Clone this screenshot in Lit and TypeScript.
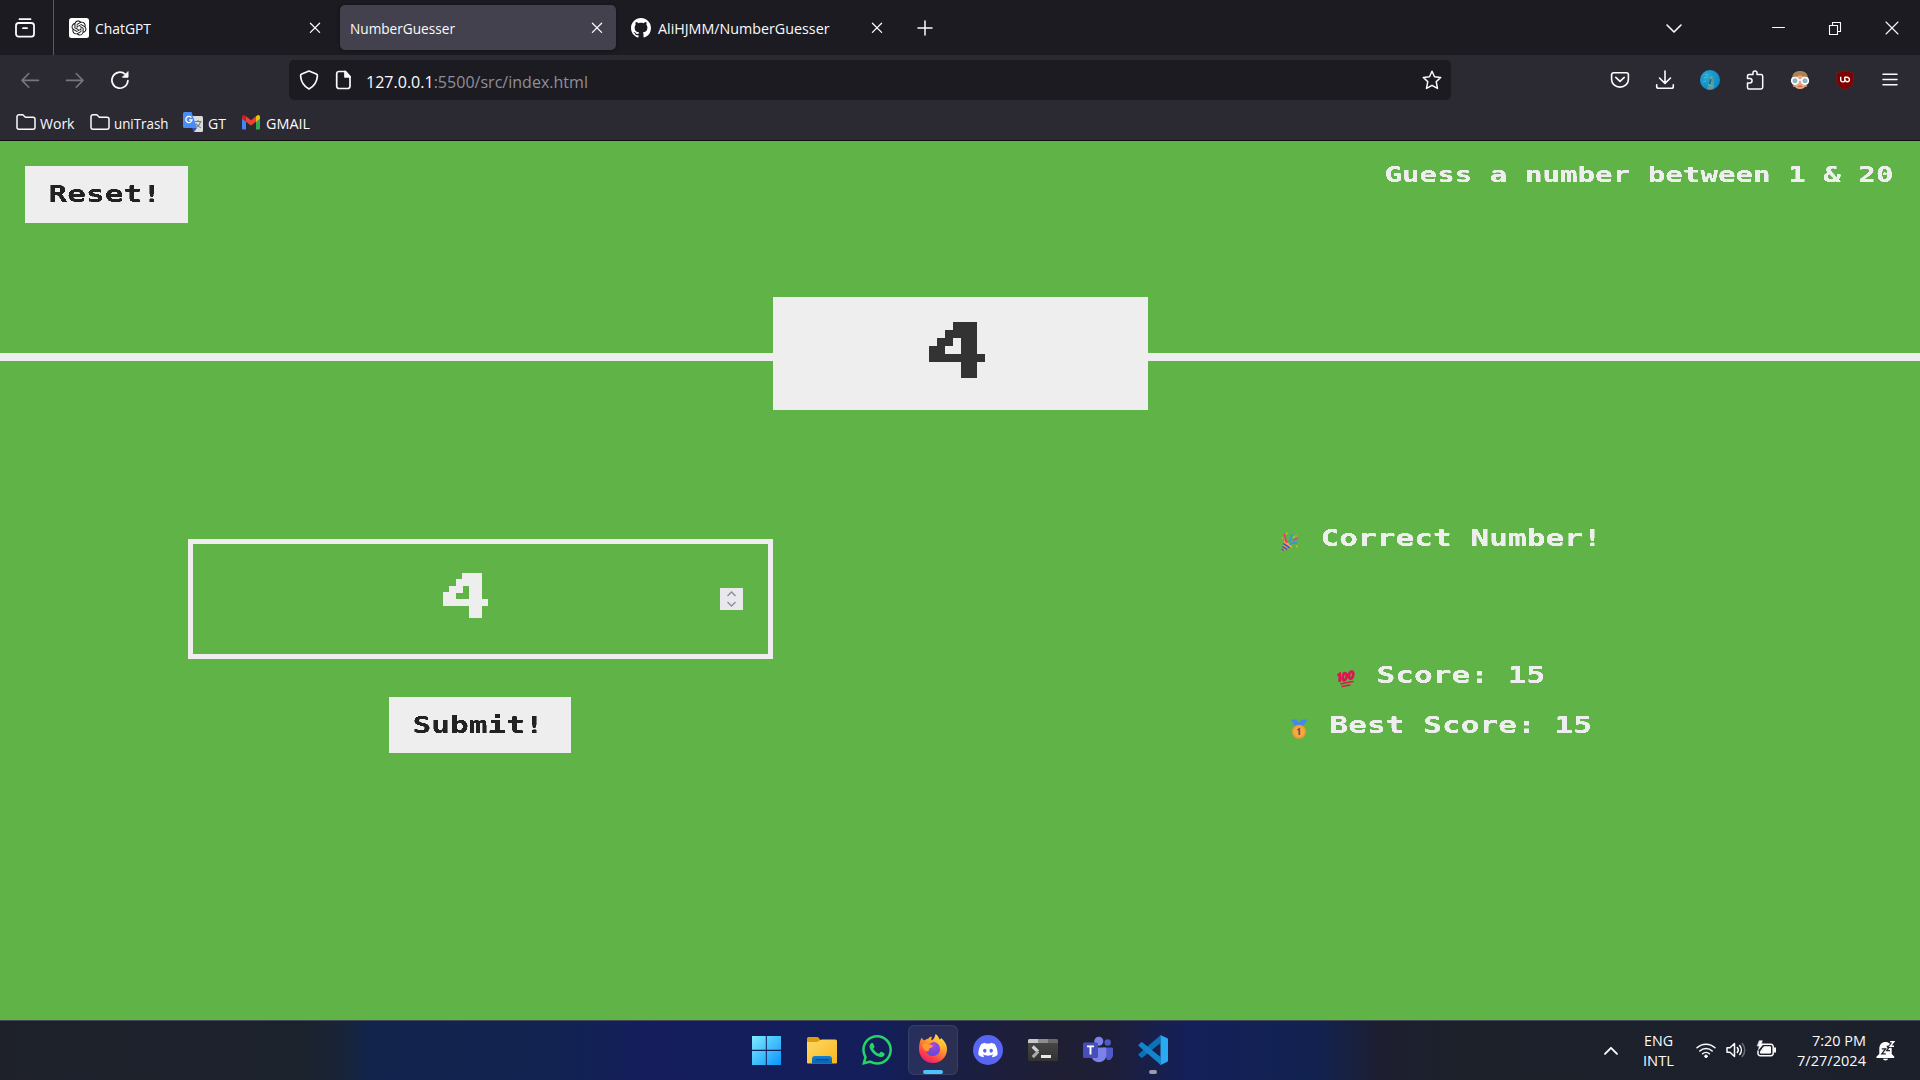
import { LitElement, html, svg, css } from "lit";
import { customElement, property, state } from "lit/decorators.js";

const OPENAI =
  "M22.2819 9.8211a5.9847 5.9847 0 0 0-.5157-4.9108 6.0462 6.0462 0 0 0-6.5098-2.9A6.0651 6.0651 0 0 0 4.9807 4.1818a5.9847 5.9847 0 0 0-3.9977 2.9 6.0462 6.0462 0 0 0 .7427 7.0966 5.98 5.98 0 0 0 .511 4.9107 6.051 6.051 0 0 0 6.5146 2.9001A5.9847 5.9847 0 0 0 13.2599 24a6.0557 6.0557 0 0 0 5.7718-4.2058 5.9894 5.9894 0 0 0 3.9977-2.9001 6.0557 6.0557 0 0 0-.7475-7.0729zm-9.022 12.6081a4.4755 4.4755 0 0 1-2.8764-1.0408l.1419-.0804 4.7783-2.7582a.7948.7948 0 0 0 .3927-.6813v-6.7369l2.02 1.1686a.071.071 0 0 1 .038.052v5.5826a4.504 4.504 0 0 1-4.4945 4.4944zm-9.6607-4.1254a4.4708 4.4708 0 0 1-.5346-3.0137l.142.0852 4.783 2.7582a.7712.7712 0 0 0 .7806 0l5.8428-3.3685v2.3324a.0804.0804 0 0 1-.0332.0615L9.74 19.9502a4.4992 4.4992 0 0 1-6.1408-1.6464zM2.3408 7.8956a4.485 4.485 0 0 1 2.3655-1.9728V11.6a.7664.7664 0 0 0 .3879.6765l5.8144 3.3543-2.0201 1.1685a.0757.0757 0 0 1-.071 0l-4.8303-2.7865A4.504 4.504 0 0 1 2.3408 7.872zm16.5963 3.8558L13.1038 8.364 15.1192 7.2a.0757.0757 0 0 1 .071 0l4.8303 2.7913a4.4944 4.4944 0 0 1-.6765 8.1042v-5.6772a.79.79 0 0 0-.407-.667zm2.0107-3.0231l-.142-.0852-4.7735-2.7818a.7759.7759 0 0 0-.7854 0L9.409 9.2297V6.8974a.0662.0662 0 0 1 .0284-.0615l4.8303-2.7866a4.4992 4.4992 0 0 1 6.6802 4.66zM8.3065 12.863l-2.02-1.1638a.0804.0804 0 0 1-.038-.0567V6.0742a4.4992 4.4992 0 0 1 7.3757-3.4537l-.142.0805L8.704 5.459a.7948.7948 0 0 0-.3927.6813zm1.0976-2.3654l2.602-1.4998 2.6069 1.4998v2.9994l-2.5974 1.4997-2.6067-1.4997Z";
const GITHUB =
  "M8 0C3.58 0 0 3.58 0 8c0 3.54 2.29 6.53 5.47 7.59.4.07.55-.17.55-.38 0-.19-.01-.82-.01-1.49-2.01.37-2.53-.49-2.69-.94-.09-.23-.48-.94-.82-1.13-.28-.15-.68-.52-.01-.53.63-.01 1.08.58 1.23.82.72 1.21 1.87.87 2.33.66.07-.52.28-.87.51-1.07-1.78-.2-3.64-.89-3.64-3.95 0-.87.31-1.59.82-2.15-.08-.2-.36-1.02.08-2.12 0 0 .67-.21 2.2.82.64-.18 1.32-.27 2-.27s1.36.09 2 .27c1.53-1.04 2.2-.82 2.2-.82.44 1.1.16 1.92.08 2.12.51.56.82 1.27.82 2.15 0 3.07-1.87 3.75-3.65 3.95.29.25.54.73.54 1.48 0 1.07-.01 1.93-.01 2.2 0 .21.15.46.55.38A8.01 8.01 0 0 0 16 8c0-4.42-3.58-8-8-8z";
const DISCORD =
  "M20.317 4.3698a19.7913 19.7913 0 00-4.8851-1.5152.0741.0741 0 00-.0785.0371c-.211.3753-.4447.8648-.6083 1.2495-1.8447-.2762-3.68-.2762-5.4868 0-.1636-.3933-.4058-.8742-.6177-1.2495a.077.077 0 00-.0785-.037 19.7363 19.7363 0 00-4.8852 1.515.0699.0699 0 00-.0321.0277C.5334 9.0458-.319 13.5799.0992 18.0578a.0824.0824 0 00.0312.0561c2.0528 1.5076 4.0413 2.4228 5.9929 3.0294a.0777.0777 0 00.0842-.0276c.4616-.6304.8731-1.2952 1.226-1.9942a.076.076 0 00-.0416-.1057c-.6528-.2476-1.2743-.5495-1.8722-.8923a.077.077 0 01-.0076-.1277c.1258-.0943.2517-.1923.3718-.2914a.0743.0743 0 01.0776-.0105c3.9278 1.7933 8.18 1.7933 12.0614 0a.0739.0739 0 01.0785.0095c.1202.099.246.1981.3728.2924a.077.077 0 01-.0066.1276 12.2986 12.2986 0 01-1.873.8914.0766.0766 0 00-.0407.1067c.3604.698.7719 1.3628 1.225 1.9932a.076.076 0 00.0842.0286c1.961-.6067 3.9495-1.5219 6.0023-3.0294a.077.077 0 00.0313-.0552c.5004-5.177-.8382-9.6739-3.5485-13.6604a.061.061 0 00-.0312-.0286zM8.02 15.3312c-1.1825 0-2.1569-1.0857-2.1569-2.419 0-1.3332.9555-2.4189 2.157-2.4189 1.2108 0 2.1757 1.0952 2.1568 2.419 0 1.3332-.9555 2.4189-2.1569 2.4189zm7.9748 0c-1.1825 0-2.1569-1.0857-2.1569-2.419 0-1.3332.9554-2.4189 2.1569-2.4189 1.2108 0 2.1757 1.0952 2.1568 2.419 0 1.3332-.946 2.4189-2.1568 2.4189Z";
const WHATSAPP =
  "M17.472 14.382c-.297-.149-1.758-.867-2.03-.967-.273-.099-.471-.148-.67.15-.197.297-.767.966-.94 1.164-.173.199-.347.223-.644.075-.297-.15-1.255-.463-2.39-1.475-.883-.788-1.48-1.761-1.653-2.059-.173-.297-.018-.458.13-.606.134-.133.298-.347.446-.52.149-.174.198-.298.298-.497.099-.198.05-.371-.025-.52-.075-.149-.669-1.612-.916-2.207-.242-.579-.487-.5-.669-.51-.173-.008-.371-.01-.57-.01-.198 0-.52.074-.792.372-.272.297-1.04 1.016-1.04 2.479 0 1.462 1.065 2.875 1.213 3.074.149.198 2.096 3.2 5.077 4.487.709.306 1.262.489 1.694.625.712.227 1.36.195 1.871.118.571-.085 1.758-.719 2.006-1.413.248-.694.248-1.289.173-1.413-.074-.124-.272-.198-.57-.347m-5.421 7.403h-.004a9.87 9.87 0 01-5.031-1.378l-.361-.214-3.741.982.998-3.648-.235-.374a9.86 9.86 0 01-1.51-5.26c.001-5.45 4.436-9.884 9.888-9.884 2.64 0 5.122 1.03 6.988 2.898a9.825 9.825 0 012.893 6.994c-.003 5.45-4.437 9.884-9.885 9.884m8.413-18.297A11.815 11.815 0 0012.05 0C5.495 0 .16 5.335.157 11.892c0 2.096.547 4.142 1.588 5.945L.057 24l6.305-1.654a11.882 11.882 0 005.683 1.448h.005c6.554 0 11.89-5.335 11.893-11.893a11.821 11.821 0 00-3.48-8.413Z";

const stroke = (body: unknown, w = 1.6) => html`<svg width="20" height="20" viewBox="0 0 20 20" fill="none" stroke="currentColor" stroke-width=${w} stroke-linecap="round" stroke-linejoin="round">${body}</svg>`;
const pic = (body: unknown, size = 20) => html`<svg width=${size} height=${size} viewBox="0 0 ${size} ${size}">${body}</svg>`;

const icons = {
  tabs: stroke(svg`<path d="M4.5 1.2h11"/><rect x="1" y="5" width="18" height="13.6" rx="2.6"/><path d="M8 10.2h4"/>`, 1.8),
  close: stroke(svg`<path d="M5.4 5.2l9.2 9.2M14.6 5.2l-9.2 9.2"/>`, 1.25),
  plus: stroke(svg`<path d="M10 3v14M3 10h14"/>`, 1.5),
  chevron: stroke(svg`<path d="M3 7l7 7 7-7"/>`, 1.6),
  back: stroke(svg`<path d="M18.5 10.4H2M8.8 3.5L2 10.4l6.8 6.9"/>`),
  forward: stroke(svg`<path d="M1.5 10.4H18M11.2 3.5L18 10.4l-6.8 6.9"/>`),
  reload: stroke(svg`<path d="M17.9 10.5A8 8 0 1 1 15.2 4.2"/><path d="M18 2v5.2h-5.2z" fill="currentColor" stroke-width="1"/>`, 1.7),
  shield: stroke(svg`<path d="M10 1l7.3 3c1 .4 1.2 1 1.1 2-.4 6-3.200 10.200-8.400 13C4.800 16.200 2 12 1.600 6c-.1-1 .1-1.600 1.100-2z"/>`, 1.7),
  page: stroke(svg`<path d="M11.500 1.500H5A2.300 2.300 0 0 0 2.700 3.800v12.400A2.300 2.300 0 0 0 5 18.500h8.700a2.300 2.300 0 0 0 2.300-2.300V6.500z"/><path d="M11 1.500v5.500h5z" fill="currentColor"/>`, 1.7),
  star: stroke(svg`<path d="M10 1.200l2.500 5.500 6.200.7-4.500 4.300 1.300 6.700-5.500-3.100-5.500 3.100 1.300-6.700L1.300 7.400l6.200-.7z"/>`, 1.5),
  pocket: stroke(svg`<path d="M3.600 2.800h12.800a2 2 0 0 1 2 2V9.500a8.400 7.600 0 0 1-16.800 0V4.800a2 2 0 0 1 2-2z"/><path d="M5.800 7.400L10 11.400l4.200-4"/>`, 1.6),
  download: stroke(svg`<path d="M10 1v12M4.500 8L10 13.400 15.500 8M1.700 14.700v1.800a1.800 1.800 0 0 0 1.800 1.800h13a1.800 1.800 0 0 0 1.800-1.800v-1.800"/>`, 1.6),
  puzzle: stroke(svg`<path d="M2.500 8V6a1.500 1.500 0 0 1 1.500-1.500h4V3a2 2 0 0 1 4 0v1.500h4A1.700 1.700 0 0 1 17.700 6v11.300a1.700 1.700 0 0 1-1.700 1.700H4a1.500 1.500 0 0 1-1.500-1.500V13h2.300a2 2 0 0 0 0-4.500H2.500z"/>`, 1.5),
  menu: stroke(svg`<path d="M3 4.200h14M3 9.500h14M3 14.800h14"/>`, 1.5),
  folder: stroke(svg`<path d="M1 4.800A2 2 0 0 1 3 2.800h3.800l2.600 2.400H17a2 2 0 0 1 2 2v8a2 2 0 0 1-2 2H3a2 2 0 0 1-2-2z"/>`, 1.5),
  openai: pic(svg`<rect width="20" height="20" rx="2.500" fill="#fff"/><g transform="translate(2.500 2.500) scale(.625)"><path d=${OPENAI} fill="#111"/></g>`),
  github: pic(svg`<g transform="scale(1.25)"><path d=${GITHUB} fill="#fff"/></g>`),
  avatar: pic(svg`<defs><radialGradient id="av" cx=".35" cy=".3" r=".8"><stop offset="0" stop-color="#2ba6cc"/><stop offset="1" stop-color="#0586cc"/></radialGradient></defs><circle cx="10" cy="10" r="10" fill="url(#av)"/><path d="M10.500 6l2.500 2 1.500 8-2 3.500H7l2-6z" fill="#5c9a9c"/><path d="M5 4l3 1M4 8l4-1M12 6l-2 7M8 14l5 3M3 12l3-1" stroke="#43c3d5" stroke-width=".9" fill="none"/><path d="M11 9l-1.500 5" stroke="#175d78" stroke-width="1.300"/>`),
  glasses: pic(svg`<path d="M2 9C2 3 5.500 1 10 1s8 2 8 8l-1 8H3z" fill="#a98358"/><path d="M4 8l6-3 6 3v6c0 3-3 5-6 5s-6-2-6-5z" fill="#eaa27c"/><g fill="#8bb6c0" stroke="#fff" stroke-width="1.600"><circle cx="5" cy="10.800" r="3.300"/><circle cx="15" cy="10.800" r="3.300"/></g><path d="M8 10h4" stroke="#fff" stroke-width="1.600"/><path d="M8 16.300h4" stroke="#b05d4d"/>`),
  ublock: pic(svg`<path d="M10 .3c2.500 1.500 5.200 2.200 8.500 2.200v8c0 4.500-3 7-8.500 9.300C4.500 17.500 1.500 15 1.500 10.500v-8C4.800 2.500 7.500 1.800 10 .3z" fill="#800000" stroke="#5c2b33" stroke-width=".6"/><path d="M5.700 6.800v3.200a1.900 1.900 0 0 0 1.900 1.900h.6a1.600 1.600 0 0 0 1.600-1.600V6.800" stroke="#fff" stroke-width="1.400" fill="none"/><path d="M10 7.300h2.200a2.200 2.200 0 1 1-2.200 2.200" stroke="#fff" stroke-width="1.400" fill="none"/>`),
  gt: pic(svg`<path d="M8 4h10.500A1.500 1.500 0 0 1 20 5.500v13a1.500 1.500 0 0 1-1.500 1.500H11z" fill="#dcdcdc"/><path d="M11.500 9.500h7M15 8v1.500M17.500 9.500c-.6 3-2.500 5-5 6M12.800 11.500c1 2 2.500 3.200 5 4.200" stroke="#6b7a80" fill="none" stroke-width="1.100"/><path d="M9 16h5l-3 4z" fill="#3351b8"/><path d="M1.500 0h7L14 16H1.500A1.500 1.500 0 0 1 0 14.500v-13A1.500 1.500 0 0 1 1.500 0z" fill="#4a8cf5"/><path d="M8.400 5.600A3.100 3.100 0 1 0 9 8H6.200" fill="none" stroke="#fff" stroke-width="1.300"/>`),
  gmail: pic(svg`<path d="M1 5v11.200A1.300 1.300 0 0 0 2.300 17.500H5V7.500z" fill="#4285f4"/><path d="M15 7.500v10h2.700a1.300 1.300 0 0 0 1.300-1.300V5z" fill="#34a853"/><path d="M15 4.500v5.200l4-3V5c0-1.900-1.900-2.600-3-1.400z" fill="#fbbc04"/><path d="M5 9.700V4.300l5 3.900 5-3.900v5.400l-5 3.800z" fill="#ea4335"/><path d="M1 5v1.700l4 3V4.300l-1-.7C2.800 2.400 1 3.200 1 5z" fill="#c5221f"/>`),
  party: pic(svg`<path d="M4.500 7.500L12.500 15 1.500 19.500z" fill="#f5a63a"/><path d="M2.300 14.500l5 3M3.300 11.500l6.500 4.500M1.800 17l2 1.500" stroke="#4458b8" stroke-width="1.600"/><path d="M6 10c-1-3 0-5-2-8M5.500 7L7 11" stroke="#ed3b72" stroke-width="1.700" fill="none"/><path d="M8.500 10c3-1 1-4 4-8M9.500 12.500c4-3 5-1 8-2" stroke="#2f9ad8" stroke-width="1.800" fill="none"/><path d="M13 8.500l5-2.500" stroke="#ed3b9c" stroke-width="1.600"/><path d="M6 1.500h1.500M13 5h1.500M16 14.500h1.500M2 6h1M15.500 4h1" stroke="#f2b63b" stroke-width="1.500"/>`),
  hundred: pic(svg`<g fill="none" stroke="#d91852" stroke-width="2.700"><path d="M1.500 6.500l2.200-1.500v8"/><ellipse cx="8.700" cy="7.800" rx="1.900" ry="3.600" transform="rotate(14 9 7.500)"/><ellipse cx="15.200" cy="6.200" rx="2" ry="3.600" transform="rotate(14 15.500 5.800)"/></g><path d="M5 14.800l12-2.300M6 17.400l8-1.500" stroke="#d91852" stroke-width="1.500" stroke-linecap="round"/>`),
  medal: pic(svg`<path d="M1.500.5h6L10 4 12.500.5h6L14 7H6z" fill="#4289ed"/><circle cx="10" cy="12.800" r="7" fill="#f19a35"/><circle cx="10" cy="12.800" r="5.300" fill="#f8a944"/><path d="M8.500 11l1.800-1v6" stroke="#8a4b3a" stroke-width="1.800" fill="none"/>`),
};

const taskIcons = {
  windows: pic(svg`<defs><linearGradient id="w" x1="0" y1="0" x2="1" y2="1"><stop offset="0" stop-color="#7cecff"/><stop offset="1" stop-color="#0a94fb"/></linearGradient></defs><path d="M1 1h13.800v13.800H1zM15.800 1H30v13.800H15.800zM1 15.900h13.800V30H1zM15.800 15.900H30V30H15.800z" fill="url(#w)"/>`, 31),
  explorer: pic(svg`<defs><linearGradient id="e" x1="0" y1="0" x2="1" y2="1"><stop offset="0" stop-color="#ffd866"/><stop offset="1" stop-color="#f8b81c"/></linearGradient><linearGradient id="eb" x1="0" y1="0" x2="0" y2="1"><stop offset="0" stop-color="#1180d8"/><stop offset="1" stop-color="#0a62b0"/></linearGradient></defs><path d="M0 3.500A1.500 1.500 0 0 1 1.500 2h8.200c1 0 1.600.3 2.200 1l1.800 2.500L10 8.500H0z" fill="#e09c08"/><path d="M0 7h9c1.500 0 2-.3 2.800-.9l1-.8c.6-.5 1.200-.8 2.200-.8h13.500A1.500 1.500 0 0 1 30 6v21.500a1 1 0 0 1-1 1H1a1 1 0 0 1-1-1z" fill="url(#e)"/><path d="M5 28.500V24a3 3 0 0 1 3-3h14a3 3 0 0 1 3 3v4.500z" fill="url(#eb)"/><path d="M8.500 24.700h13" stroke="#064586" stroke-width="1.200"/>`, 30),
  whatsapp: pic(svg`<g transform="scale(1.25)"><path d=${WHATSAPP} fill="#25d366"/></g>`, 30),
  firefox: pic(svg`<defs><linearGradient id="f" x1=".8" y1="0" x2=".2" y2="1"><stop offset="0" stop-color="#fff044"/><stop offset=".4" stop-color="#ff9a2b"/><stop offset=".75" stop-color="#ff3e4c"/><stop offset="1" stop-color="#e5177f"/></linearGradient><radialGradient id="fp" cx=".55" cy=".2" r=".8"><stop offset="0" stop-color="#a944e8"/><stop offset="1" stop-color="#5a4bd6"/></radialGradient></defs><path d="M3.800 3.500c.5 1.200 1.200 2.200 2.300 3C7.500 5.500 9 4.800 10.500 4.600 11.500 3 12.500 2.500 14 3c-1 1-1 2.500 0 3.500 1.500-1.500 3-3 3.500-6.500 2 1 3.500 3.500 4 5.500.7-.3 1.200-.8 1.500-1.500C27 7 29 11 29 15c0 8-6 14-14 14S1 23 1 15c0-4.500 1-9 2.800-11.500z" fill="url(#f)"/><path d="M10.500 11.500c2-.5 3-3 6-3.500 3.500 0 6.500 3 6.500 7 0 4-3 7-7 7s-6.500-2.500-7-6z" fill="url(#fp)" transform="translate(-1 0)"/><path d="M4 10.500c2-1 5-1.300 7-.3l4 1.300c-.3 1.700-1.800 2.400-3.500 3-.8.500-.8 1.500-.5 2.500-3 1-6-1-7-6.500z" fill="#ff9a2b"/><path d="M18.500 8c3 1.500 5 4.500 4.500 8 2-3 1-8-4.500-8z" fill="#ffc23c"/>`, 30),
  discord: pic(svg`<circle cx="15" cy="15" r="15" fill="#5865f2"/><g transform="translate(5.400 5.400) scale(.8)"><path d=${DISCORD} fill="#fff"/></g>`, 30),
  terminal: pic(svg`<defs><linearGradient id="t" x1="0" y1="0" x2="0" y2="1"><stop offset="0" stop-color="#4b4b4b"/><stop offset="1" stop-color="#323232"/></linearGradient></defs><rect y="4" width="30" height="22" rx="1.500" fill="url(#t)"/><path d="M1.500 4H10v4H0V5.500A1.500 1.500 0 0 1 1.500 4z" fill="#c9c7c8"/><path d="M10 4h10v4H10z" fill="#8f8d8e"/><path d="M20 4h8.500A1.500 1.500 0 0 1 30 5.500V8H20z" fill="#6a6869"/><path d="M4.700 11.500l5.300 5.200" stroke="#d2d2d2" stroke-width="3.200"/><path d="M10.200 16.500l-5.500 5.600" stroke="#a8a8a8" stroke-width="3.200"/><path d="M13 20h10v3H13z" fill="#e8e8e8"/>`, 30),
  teams: pic(svg`<circle cx="24.700" cy="7.500" r="3.200" fill="#5059c9"/><path d="M20 12.500h8.800a1.200 1.200 0 0 1 1.200 1.200v6.300a5 5 0 0 1-6 5z" fill="#5059c9"/><circle cx="15.800" cy="6.200" r="4.500" fill="#7b83eb"/><path d="M9 12.500h13a1.300 1.300 0 0 1 1.300 1.300V21a7.600 7.600 0 0 1-15 0z" fill="#7b83eb"/><rect x="0" y="7.500" width="15" height="15.500" rx="1.500" fill="#464eb8"/><path d="M4 11.400h7M7.500 11.400v8" stroke="#fff" stroke-width="1.900"/>`, 30),
  vscode: pic(svg`<path d="M.7 20.200l2.200 2.200c.5.500 1.100.5 1.700.1L22.500 8V.2L.7 19c-.4.300-.4.800 0 1.200z" fill="#0b72b8"/><path d="M.7 9.800l2.200-2.200c.5-.5 1.100-.5 1.700-.1L22.500 22v7.800L.7 11c-.4-.3-.4-.8 0-1.200z" fill="#1485cc"/><path d="M22.200 0l6.800 3c.7.300 1 .8 1 1.500v21c0 .7-.4 1.200-1 1.500l-6.500 3c-.7.200-1 .1-1.500-.3.900.6 1.500.1 1.500-.9V1.200c0-1-.8-1.500-1.500-.9.400-.4.800-.5 1.200-.3z" fill="#2aa8f2"/>`, 30),
};

const trayIcons = {
  up: stroke(svg`<path d="M4 12.800l6-6 6 6"/>`, 1.9),
  wifi: stroke(svg`<path d="M1 7.800a13 13 0 0 1 18 0M3.800 11a9 9 0 0 1 12.400 0M6.600 13.800a5 5 0 0 1 6.800 0"/><circle cx="10" cy="16.300" r="1.300" fill="currentColor" stroke-width="1"/>`, 1.5),
  volume: stroke(svg`<path d="M1 7.800h3L8.500 3.500v13L4 12.300H1z"/><path d="M11.300 7.500a4 4 0 0 1 0 5M13.700 5.500a7 7 0 0 1 0 9"/><path d="M16.300 3.500a10 10 0 0 1 0 13" opacity=".35"/>`, 1.5),
  battery: stroke(svg`<path d="M6.500 4.300H15a2.200 2.200 0 0 1 2.200 2.200v7A2.200 2.200 0 0 1 15 15.700H4.200A2.200 2.200 0 0 1 2 13.500V11"/><path d="M19 8.300v3.500" stroke-width="2"/><path d="M8.200 6.800h6.300v6.300H4.500v-1.300z" fill="currentColor" stroke-width="1"/><path d="M3.500 .8h2.800L5.300 4h2L2.500 9.800l.8-3.800H1.500z" fill="currentColor" stroke-width=".6"/>`, 1.5),
  bell: html`<svg width="20" height="22" viewBox="0 0 20 22"><path d="M3.300 9C3.300 4.500 6 2 9.500 2s6.200 2.500 6.200 7v5l2.500 2.500v1.500H.5v-1.500L3.300 14z" fill="#fff"/><path d="M7 18.800h5c-.4 2.200-4.600 2.200-5 0z" fill="#fff"/><path d="M5.800 8.800h3.800l-3.800 5h4M10.700 6.500h3l-3 4.200H14" stroke="#1c212c" stroke-width="1.300" fill="none"/><path d="M14.200 1.800h3.600l-3.600 4.400h3.800" stroke="#1c212c" stroke-width="3.200" fill="none"/><path d="M14.200 1.800h3.600l-3.600 4.400h3.800" stroke="#fff" stroke-width="1.400" fill="none"/></svg>`,
};

/** Single line of interface text, fitted to a given advance width. */
@customElement("ui-text")
class UiText extends LitElement {
  @property() text = "";
  @property() tail = "";
  @property({ type: Number }) width = 50;
  @property({ type: Number }) size = 15;
  static styles = css`
    :host { display: block; flex: none; }
    svg { display: block; overflow: visible; }
    .t { font-family: "Open Sans", "Noto Sans", sans-serif; fill: currentColor; }
    .tail { fill: #8f8f98; }
  `;
  render() {
    return html`<svg width=${this.width} height="20"><text class="t" x="0" y="15.600" font-size=${this.size} textLength=${this.width} lengthAdjust="spacingAndGlyphs">${this.text}<tspan class="tail">${this.tail}</tspan></text></svg>`;
  }
}

/** Wide monospace game lettering with hard edges; every character takes one pitch. */
@customElement("game-text")
class GameText extends LitElement {
  @property() text = "";
  @property({ type: Number }) pitch = 18.75;
  static styles = css`
    :host { display: block; flex: none; }
    svg { display: block; overflow: visible; }
    .t { font-family: "DejaVu Sans Mono", monospace; font-weight: 700; fill: currentColor; white-space: pre; }
  `;
  render() {
    const w = this.text.length * this.pitch;
    const cap = Math.round(this.pitch * 0.9);
    return html`<svg width=${w} height="17">
      <defs><filter id="hard" filterUnits="userSpaceOnUse" x="-4" y="-6" width=${w + 8} height="32" color-interpolation-filters="sRGB"><feComponentTransfer><feFuncA type="discrete" tableValues="0 0.55 1 1"/></feComponentTransfer></filter></defs>
      <text class="t" filter="url(#hard)" x="-1.500" y=${cap} font-size=${this.pitch * 1.23} textLength=${w} lengthAdjust="spacingAndGlyphs">${this.text}</text></svg>`;
  }
}

/** Large digit snapped to a seven by seven block grid. */
@customElement("block-digit")
class BlockDigit extends LitElement {
  @property() text = "";
  @property({ type: Number }) size = 56;
  static styles = css`
    :host { display: block; flex: none; }
    svg { display: block; overflow: visible; }
    .t { font-family: "DejaVu Sans Mono", monospace; font-weight: 700; fill: currentColor; }
  `;
  render() {
    const s = this.size;
    // Two sample points per tile on each axis, so odd block sizes stay on whole pixels.
    const tile = Math.round((s * 2) / 7);
    const a = 3;
    const b = Math.floor(tile / 2) + 3;
    const dot = s > 50 ? 2 : 1;
    const k = s / 56;
    return html`<svg width=${s} height=${s}>
      <defs><filter id="m" filterUnits="userSpaceOnUse" x="0" y="0" width=${s} height=${s} color-interpolation-filters="sRGB">
        <feFlood x=${a} y=${a} width=${dot} height=${dot} result="p1"/>
        <feFlood x=${b} y=${a} width=${dot} height=${dot} result="p2"/>
        <feFlood x=${a} y=${b} width=${dot} height=${dot} result="p3"/>
        <feFlood x=${b} y=${b} width=${dot} height=${dot} result="p4"/>
        <feMerge x="0" y="0" width=${tile} height=${tile} result="cell"><feMergeNode in="p1"/><feMergeNode in="p2"/><feMergeNode in="p3"/><feMergeNode in="p4"/></feMerge>
        <feTile in="cell" result="grid"/>
        <feComposite in="SourceGraphic" in2="grid" operator="in"/>
        <feComponentTransfer><feFuncA type="discrete" tableValues="0 1"/></feComponentTransfer>
        <feMorphology operator="dilate" radius="3"/>
      </filter></defs>
      <g filter="url(#m)"><text class="t" x=${-6 * k} y=${53 * k} font-size=${77 * k} textLength=${68 * k} lengthAdjust="spacingAndGlyphs">${this.text}</text></g>
    </svg>`;
  }
}

@customElement("app-root")
class AppRoot extends LitElement {
  @state() private guess = "4";
  @state() private score = 15;
  @state() private best = 15;

  static styles = css`
    :host { display: flex; flex-direction: column; width: 1920px; height: 1080px; overflow: hidden; color: #fbfbfe; font-family: "Open Sans", sans-serif; }
    * { box-sizing: border-box; }
    svg { display: block; flex: none; }
    .tabs { display: flex; align-items: center; height: 55px; flex: none; background: #1c1b22; }
    .overview { width: 54px; height: 55px; padding: 18px 0 0 15px; border-right: 1px solid #5a5962; }
    .tab { display: flex; align-items: center; width: 276px; height: 45px; padding: 0 9px 0 11px; border-radius: 5px; gap: 7px; margin-right: 4px; }
    .tab.first { margin-left: 4px; margin-right: 6px; gap: 6px; }
    .tab.active { background: #42414d; padding-left: 10px; box-shadow: 0 0 4px #0006; }
    .push { margin-left: auto; }
    .plus { margin-left: 15px; }
    .chev { margin-left: 729px; }
    .win { display: flex; margin-left: 84px; gap: 37px; }
    .bar { display: flex; align-items: center; height: 50px; flex: none; background: #2b2a33; }
    .nav { display: flex; gap: 25px; padding-left: 20px; width: 289px; }
    .dim { color: #77767f; }
    .url { display: flex; align-items: center; width: 1162px; height: 40px; padding: 0 9px 0 10px; border-radius: 5px; background: #1c1b22; }
    .url ui-text { margin-left: 12px; transform: translateY(2px); }
    .url .pg { margin-left: 15px; }
    .ext { display: flex; gap: 25px; margin-left: 159px; }
    .marks { display: flex; align-items: center; height: 36px; flex: none; padding: 0 0 1px 16px; background: #2b2a33; border-bottom: 1px solid #0c0c0d; }
    .mark { display: flex; align-items: center; gap: 4px; margin-right: 15px; }
    .mark ui-text { transform: translateY(1px); }
    .mark.site { gap: 5px; }
    .game { flex: 1; background: #60b347; color: #eee; display: flex; flex-direction: column; }
    .head { display: flex; justify-content: space-between; height: 156px; padding: 25px; align-items: flex-start; }
    .btn { display: flex; align-items: center; justify-content: center; background: #eee; color: #222; }
    .reset { width: 163px; height: 57px; padding: 0 1px 2px 0; }
    .between { padding-top: 0; }
    .hero { display: flex; align-items: center; height: 113px; }
    .line { height: 8px; flex: 1; background: #eee; margin-top: 7px; }
    .card { width: 375px; height: 113px; background: #eee; color: #333; padding: 25px 0 0 156px; }
    .cols { display: grid; grid-template-columns: 960px 960px; padding-top: 119px; }
    .left { display: flex; flex-direction: column; align-items: center; padding-top: 10px; gap: 38px; }
    .field { display: flex; width: 585px; height: 120px; border: 5px solid #eee; padding: 29px 25px 0 250px; justify-content: space-between; }
    .spin { width: 23px; height: 22px; margin-top: 15px; background: #e9e9ed; }
    .submit { width: 182px; height: 56px; padding-bottom: 1px; }
    .right { display: flex; flex-direction: column; align-items: center; padding-left: 3px; }
    .row { display: flex; gap: 22px; }
    .row svg { margin-top: 3px; margin-bottom: -1px; }
    .row.r2 { margin-top: 115px; }
    .row.r3 { margin-top: 28px; }
    .task { display: flex; height: 60px; flex: none; border-top: 1px solid #454955; justify-content: space-between;
      background: linear-gradient(90deg, #1e212a 0, #1c222c 300px, #18243a 345px, #12244c 370px, #122352 560px, #151d5c 650px, #131e5a 880px, #1a1e42 960px, #1f1e33 1060px, #1d1e38 1110px, #14205a 1190px, #12224f 1320px, #1d1e30 1380px, #1c212a 1460px, #1c202b 100%); }
    .apps { display: flex; padding-left: 739px; }
    .app { width: 55px; height: 59px; display: flex; flex-direction: column; align-items: center; padding-top: 14px; padding-left: 1px; }
    .app.start { padding-left: 0; padding-right: 1px; }
    .app.on { width: 50px; margin: 4px 2px 5px 4px; height: 50px; padding: 8px 0 0; border-radius: 6px; background: #ffffff14; border: 1px solid #ffffff12; }
    .pill { width: 20px; height: 4px; border-radius: 2px; background: #4cc2ff; margin-top: 6px; }
    .pill.idle { width: 8px; background: #9a9cac; margin-top: 5px; }
    .tray { display: flex; align-items: center; padding: 0 24px 0 0; }
    .two { display: flex; flex-direction: column; align-items: flex-end; margin-top: -1px; }
    .two.mid { align-items: center; margin: -1px 22px 0 22px; }
    .sys { display: flex; gap: 10px; margin-top: -1px; }
    .two.clock { margin: -1px 10px 0 21px; }
  `;

  render() {
    return html`
      <div class="tabs">
        <div class="overview">${icons.tabs}</div>
        <div class="tab first">${icons.openai}<ui-text text="ChatGPT" width="56"></ui-text><span class="push">${icons.close}</span></div>
        <div class="tab active"><ui-text text="NumberGuesser" width="105"></ui-text><span class="push">${icons.close}</span></div>
        <div class="tab">${icons.github}<ui-text text="AliHJMM/NumberGuesser" width="171.500"></ui-text><span class="push">${icons.close}</span></div>
        <div class="plus">${icons.plus}</div>
        <div class="chev">${icons.chevron}</div>
        <div class="win">
          ${stroke(svg`<path d="M4.500 9.500h12"/>`, 1)}
          ${stroke(svg`<path d="M4.500 7.500h8v9h-8zM7.500 7.500v-3h8v9h-3"/>`, 1.1)}
          ${stroke(svg`<path d="M4 4l12 12M16 4L4 16"/>`, 1.1)}
        </div>
      </div>
      <div class="bar">
        <div class="nav"><span class="dim">${icons.back}</span><span class="dim">${icons.forward}</span>${icons.reload}</div>
        <div class="url">${icons.shield}<span class="pg">${icons.page}</span><ui-text text="127.0.0.1" tail=":5500/src/index.html" width="222" size="16.500"></ui-text><span class="push">${icons.star}</span></div>
        <div class="ext">${icons.pocket}${icons.download}${icons.avatar}${icons.puzzle}${icons.glasses}${icons.ublock}${icons.menu}</div>
      </div>
      <div class="marks">
        <div class="mark">${icons.folder}<ui-text text="Work" width="34.500"></ui-text></div>
        <div class="mark">${icons.folder}<ui-text text="uniTrash" width="54.500"></ui-text></div>
        <div class="mark site">${icons.gt}<ui-text text="GT" width="18"></ui-text></div>
        <div class="mark site">${icons.gmail}<ui-text text="GMAIL" width="44"></ui-text></div>
      </div>
      <div class="game">
        <div class="head">
          <div class="btn reset"><game-text text="Reset!"></game-text></div>
          <div class="between"><game-text text=${"Guess a number between 1 & 20"} pitch="17.550"></game-text></div>
        </div>
        <div class="hero"><div class="line"></div><div class="card"><block-digit text=${this.guess}></block-digit></div><div class="line"></div></div>
        <div class="cols">
          <div class="left">
            <div class="field"><block-digit text=${this.guess} size="45"></block-digit>
              <div class="spin"><svg width="23" height="22" fill="none" stroke="#8f8f9d" stroke-width="1.500"><path d="M7.500 8l4-4 4 4M7.500 14l4 4 4-4"/></svg></div>
            </div>
            <div class="btn submit"><game-text text="Submit!"></game-text></div>
          </div>
          <div class="right">
            <div class="row">${icons.party}<game-text text="Correct Number!"></game-text></div>
            <div class="row r2">${icons.hundred}<game-text text=${"Score: " + this.score}></game-text></div>
            <div class="row r3">${icons.medal}<game-text text=${"Best Score: " + this.best}></game-text></div>
          </div>
        </div>
      </div>
      <div class="task">
        <div class="apps">
          <div class="app start">${taskIcons.windows}</div>
          <div class="app">${taskIcons.explorer}</div>
          <div class="app">${taskIcons.whatsapp}</div>
          <div class="app on">${taskIcons.firefox}<span class="pill"></span></div>
          <div class="app">${taskIcons.discord}</div>
          <div class="app">${taskIcons.terminal}</div>
          <div class="app">${taskIcons.teams}</div>
          <div class="app">${taskIcons.vscode}<span class="pill idle"></span></div>
        </div>
        <div class="tray">
          ${trayIcons.up}
          <div class="two mid"><ui-text text="ENG" width="29"></ui-text><ui-text text="INTL" width="31"></ui-text></div>
          <div class="sys">${trayIcons.wifi}${trayIcons.volume}${trayIcons.battery}</div>
          <div class="two clock"><ui-text text="7:20 PM" width="54"></ui-text><ui-text text="7/27/2024" width="69"></ui-text></div>
          ${trayIcons.bell}
        </div>
      </div>
    `;
  }
}
